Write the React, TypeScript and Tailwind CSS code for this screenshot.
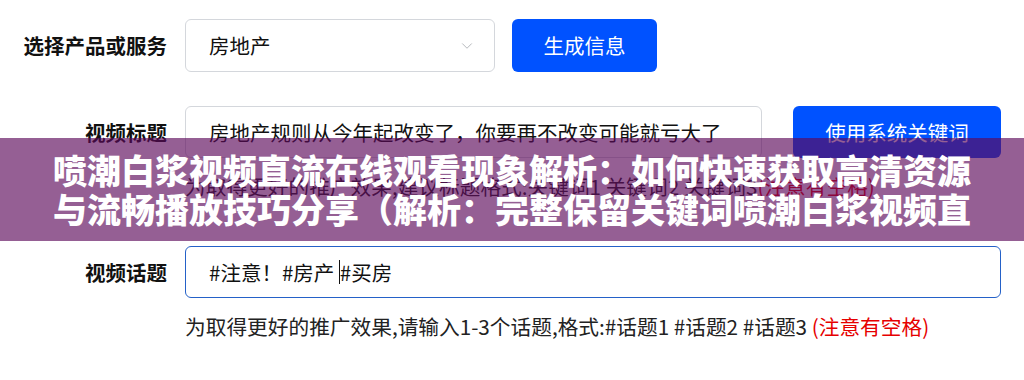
import React from 'react';
import { ChevronDown } from 'lucide-react';

const font = { fontFamily: '"Noto Sans CJK SC", "Noto Sans", sans-serif' };

function Label({ children }: { children: React.ReactNode }) {
  return (
    <div className="w-[167px] shrink-0 text-right text-[20.5px] font-bold text-[#111]">
      {children}
    </div>
  );
}

function App() {
  return (
    <div className="relative w-[1024px] h-[380px] overflow-hidden bg-white text-[#222]" style={font}>
      <div className="pt-[19px]">
        {/* product / service */}
        <div className="flex items-center h-[53px]">
          <Label>选择产品或服务</Label>
          <div className="ml-[18px] w-[310px] h-full flex items-center justify-between pl-[23px] pr-[18px] rounded-[6px] border border-[#d4d7dc] text-[20.5px] text-[#111]">
            <span>房地产</span>
            <ChevronDown className="w-[18px] h-[18px] text-[#b0b3b8]" strokeWidth={1.25} />
          </div>
          <button className="ml-[17px] w-[145px] h-full rounded-[6px] bg-[#0052ff] text-white text-[20.5px]">
            生成信息
          </button>
        </div>

        {/* title */}
        <div className="flex items-center h-[52px] mt-[34px]">
          <Label>视频标题</Label>
          <div className="ml-[18px] w-[577px] h-full flex items-center pl-[23px] rounded-[6px] border border-[#d4d7dc] text-[20.5px] text-[#111] whitespace-nowrap">
            房地产规则从今年起改变了，你要再不改变可能就亏大了
          </div>
          <button className="ml-[31px] w-[208px] h-full rounded-[6px] bg-[#0052ff] text-white text-[20.5px]">
            使用系统关键词
          </button>
        </div>
        <div className="ml-[185px] mt-[15px] h-[26px] leading-[26px] text-[20.7px] text-[#222] whitespace-nowrap">
          为取得更好的推广效果,建议标题格式:关键词1 关键词2 关键词3<span className="text-[#e60000]">(注意有空格)</span>
        </div>

        {/* topic */}
        <div className="flex items-center h-[52px] mt-[47px]">
          <Label>视频话题</Label>
          <div className="ml-[18px] w-[816px] h-full flex items-center pl-[23px] rounded-[6px] border border-[#2461c8] text-[20.5px] text-[#111] whitespace-pre">
            <span>#注意！#房产 </span>
            <span className="inline-block w-px h-[24px] bg-[#111]" />
            <span>#买房</span>
          </div>
        </div>
        <div className="ml-[185px] mt-[15px] h-[26px] leading-[26px] text-[20.7px] text-[#222] whitespace-nowrap">
          为取得更好的推广效果,请输入1-3个话题,格式:#话题1 #话题2 #话题3 <span className="text-[#e60000]">(注意有空格)</span>
        </div>
      </div>

      {/* overlay banner */}
      <div className="absolute left-0 right-0 top-[138px] h-[103px] bg-[#5c095b]/65 px-[40px] pt-[12px]">
        <p className="text-center text-white font-black text-[34px] leading-[39px] whitespace-nowrap">
          喷潮白浆视频直流在线观看现象解析：如何快速获取高清资源
        </p>
        <p className="text-center text-white font-black text-[34px] leading-[39px] whitespace-nowrap">
          与流畅播放技巧分享（解析：完整保留关键词喷潮白浆视频直
        </p>
      </div>
    </div>
  );
}

export default App;
